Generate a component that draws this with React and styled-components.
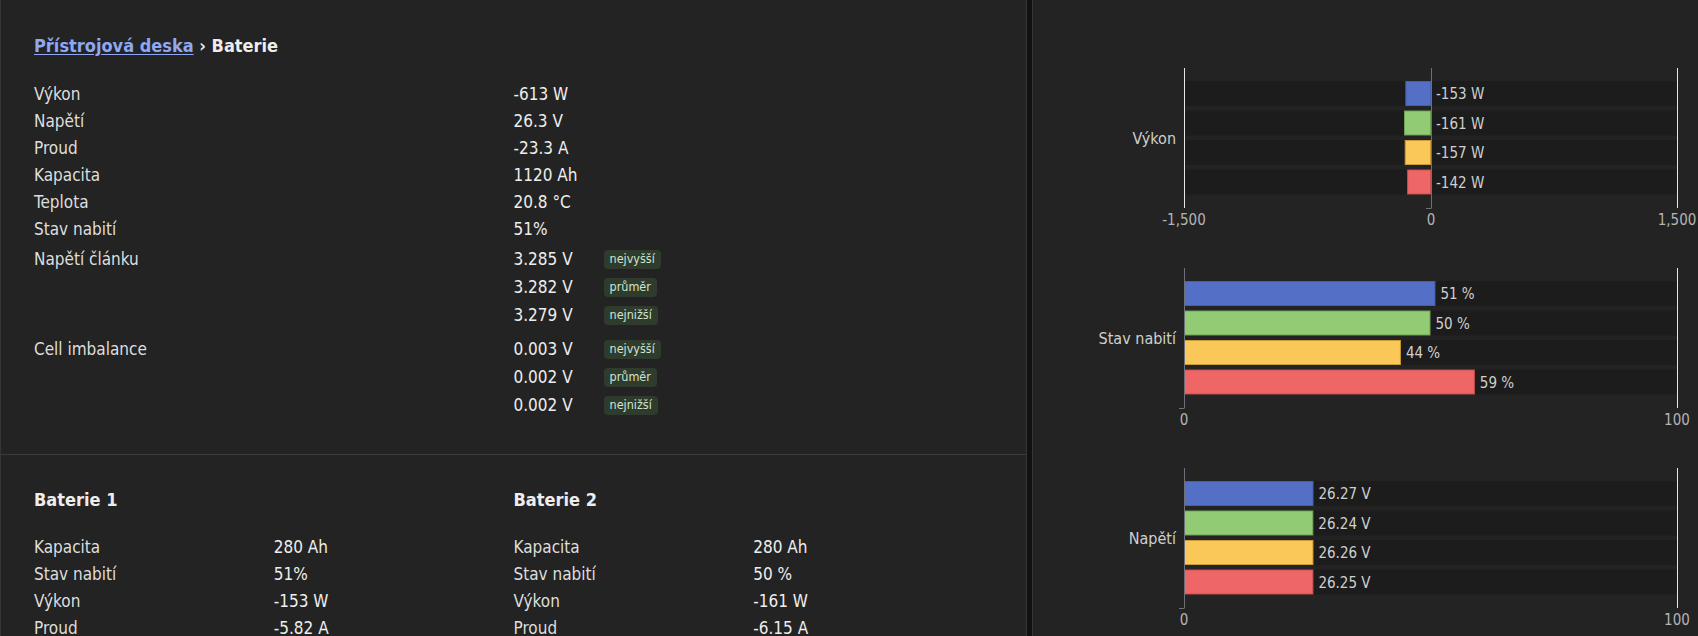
import styled, { createGlobalStyle } from "styled-components";

const FONT = `"DejaVu Sans Condensed", "DejaVu Sans", "Liberation Sans", sans-serif`;

const GlobalStyle = createGlobalStyle`
  body {
    margin: 0;
    background: #111111;
    font-family: ${FONT};
    font-stretch: condensed;
    color: #e2e2e2;
  }
`;

const summary = [
  { label: "Výkon", value: "-613 W" },
  { label: "Napětí", value: "26.3 V" },
  { label: "Proud", value: "-23.3 A" },
  { label: "Kapacita", value: "1120 Ah" },
  { label: "Teplota", value: "20.8 °C" },
  { label: "Stav nabití", value: "51%" },
];

const groups = [
  {
    label: "Napětí článku",
    items: [
      { value: "3.285 V", tag: "nejvyšší" },
      { value: "3.282 V", tag: "průměr" },
      { value: "3.279 V", tag: "nejnižší" },
    ],
  },
  {
    label: "Cell imbalance",
    items: [
      { value: "0.003 V", tag: "nejvyšší" },
      { value: "0.002 V", tag: "průměr" },
      { value: "0.002 V", tag: "nejnižší" },
    ],
  },
];

const packs = [
  {
    name: "Baterie 1",
    rows: [
      ["Kapacita", "280 Ah"],
      ["Stav nabití", "51%"],
      ["Výkon", "-153 W"],
      ["Proud", "-5.82 A"],
    ],
  },
  {
    name: "Baterie 2",
    rows: [
      ["Kapacita", "280 Ah"],
      ["Stav nabití", "50 %"],
      ["Výkon", "-161 W"],
      ["Proud", "-6.15 A"],
    ],
  },
];

const COLORS = [
  { fill: "#5470c6", stroke: "#4660ad" },
  { fill: "#91cc75", stroke: "#6fa456" },
  { fill: "#fac858", stroke: "#c99a35" },
  { fill: "#ee6666", stroke: "#c85050" },
];

const charts = [
  { label: "Výkon", min: -1500, max: 1500, ticks: ["-1,500", "0", "1,500"], values: [-153, -161, -157, -142], unit: "W", digits: 0 },
  { label: "Stav nabití", min: 0, max: 100, ticks: ["0", "100"], values: [51, 50, 44, 59], unit: "%", digits: 0 },
  { label: "Napětí", min: 0, max: 100, ticks: ["0", "100"], values: [26.27, 26.24, 26.26, 26.25], unit: "V", digits: 2 },
];

const Page = styled.div`
  display: flex;
  gap: 5px;
  height: 636px;
  overflow: hidden;
`;

const LeftCard = styled.div`
  width: 1027px;
  flex: none;
  box-sizing: border-box;
  background: #232323;
  border-left: 1px solid #363636;
  border-right: 1px solid #363636;
`;

const Section = styled.section`
  padding: ${(p) => p.$top}px 33px 35px;
  & + & {
    border-top: 1px solid #3a3a3a;
  }
`;

const Heading = styled.h2`
  margin: 0 0 ${(p) => p.$space || 22}px;
  font-size: 18px;
  line-height: 24px;
  font-weight: bold;
  color: #ededed;
`;

const Crumb = styled.a`
  color: #8ea8f4;
  text-decoration: underline;
  text-underline-offset: 2px;
`;

const Row = styled.div`
  display: grid;
  grid-template-columns: 1fr 1fr;
  font-size: 17px;
  line-height: ${(p) => p.$h || 27}px;
  margin-top: ${(p) => p.$gap || 0}px;
`;

const Label = styled.span`
  color: #dedede;
`;

const Value = styled.span`
  color: #eeeeee;
`;

const Items = styled.div`
  display: flex;
  flex-direction: column;
`;

const Item = styled.div`
  display: flex;
  align-items: center;
  height: 28px;
`;

const ItemValue = styled.span`
  width: 90px;
  color: #eeeeee;
`;

const Badge = styled.span`
  display: inline-flex;
  align-items: center;
  height: 19px;
  padding: 0 6px;
  border-radius: 4px;
  background: #2e3b2d;
  color: #cfe4cf;
  font-size: 12.5px;
  line-height: 1;
`;

const Packs = styled.div`
  display: grid;
  grid-template-columns: 1fr 1fr;
`;

const RightCard = styled.div`
  flex: 1;
  box-sizing: border-box;
  background: #232323;
  border-left: 1px solid #363636;
  padding-top: 40px;
  display: flex;
  flex-direction: column;
`;

const ChartSvg = styled.svg`
  display: block;
  flex: none;
  font-family: ${FONT};
  font-stretch: condensed;
`;

// horizontal bar chart, one category with four series
const BarChart = ({ label, min, max, ticks, values, unit, digits }) => {
  const left = 151;
  const right = 644;
  const top = 28;
  const bottom = 168;
  const x = (v) => left + ((v - min) / (max - min)) * (right - left);
  const zero = Math.round(x(0));
  const tickXs = ticks.length === 3 ? [left, zero, right] : [left, right];

  return (
    <ChartSvg width="666" height="200">
      {values.map((v, i) => {
        const y = 41 + i * 29.5;
        const x0 = Math.min(zero, x(v));
        const w = Math.abs(x(v) - zero);
        const c = COLORS[i];
        const text = `${v.toFixed(digits)} ${unit}`;
        const lx = v < 0 ? zero + 5 : x(v) + 5;
        return (
          <g key={i}>
            <rect x={left} y={y} width={right - left} height="25" fill="#1c1c1c" />
            <rect x={x0 + 0.5} y={y + 0.5} width={w - 1} height="24" fill={c.fill} stroke={c.stroke} />
            <text x={lx} y={y + 13} fontSize="15" fill="#cfcfcf" dominantBaseline="central">
              {text}
            </text>
          </g>
        );
      })}
      {min < 0 && <line x1={left + 0.5} x2={left + 0.5} y1={top} y2={bottom} stroke="#e6e6e6" />}
      <line x1={right + 0.5} x2={right + 0.5} y1={top} y2={bottom} stroke="#e6e6e6" />
      <line x1={zero + 0.5} x2={zero + 0.5} y1={top} y2={bottom} stroke="#6e7079" />
      <line x1={zero - 5} x2={zero + 0.5} y1={bottom + 0.5} y2={bottom + 0.5} stroke="#6e7079" />
      <text x="143" y="98" fontSize="16" fill="#cfcfcf" textAnchor="end" dominantBaseline="central">
        {label}
      </text>
      {ticks.map((t, i) => (
        <text key={t} x={tickXs[i]} y="180" fontSize="15" fill="#b4b4b4" textAnchor="middle" dominantBaseline="central">
          {t}
        </text>
      ))}
    </ChartSvg>
  );
};

export default function App() {
  return (
    <>
      <GlobalStyle />
      <Page>
        <LeftCard>
          <Section $top={34}>
            <Heading $space={23}>
              <Crumb href="#">Přístrojová deska</Crumb> › Baterie
            </Heading>
            {summary.map((r) => (
              <Row key={r.label}>
                <Label>{r.label}</Label>
                <Value>{r.value}</Value>
              </Row>
            ))}
            {groups.map((g, gi) => (
              <Row key={g.label} $h={28} $gap={gi ? 6 : 2}>
                <Label>{g.label}</Label>
                <Items>
                  {g.items.map((it, i) => (
                    <Item key={i}>
                      <ItemValue>{it.value}</ItemValue>
                      <Badge>{it.tag}</Badge>
                    </Item>
                  ))}
                </Items>
              </Row>
            ))}
          </Section>
          <Section $top={33}>
            <Packs>
              {packs.map((p) => (
                <div key={p.name}>
                  <Heading>{p.name}</Heading>
                  {p.rows.map(([l, v]) => (
                    <Row key={l}>
                      <Label>{l}</Label>
                      <Value>{v}</Value>
                    </Row>
                  ))}
                </div>
              ))}
            </Packs>
          </Section>
        </LeftCard>
        <RightCard>
          {charts.map((c) => (
            <BarChart key={c.label} {...c} />
          ))}
        </RightCard>
      </Page>
    </>
  );
}
